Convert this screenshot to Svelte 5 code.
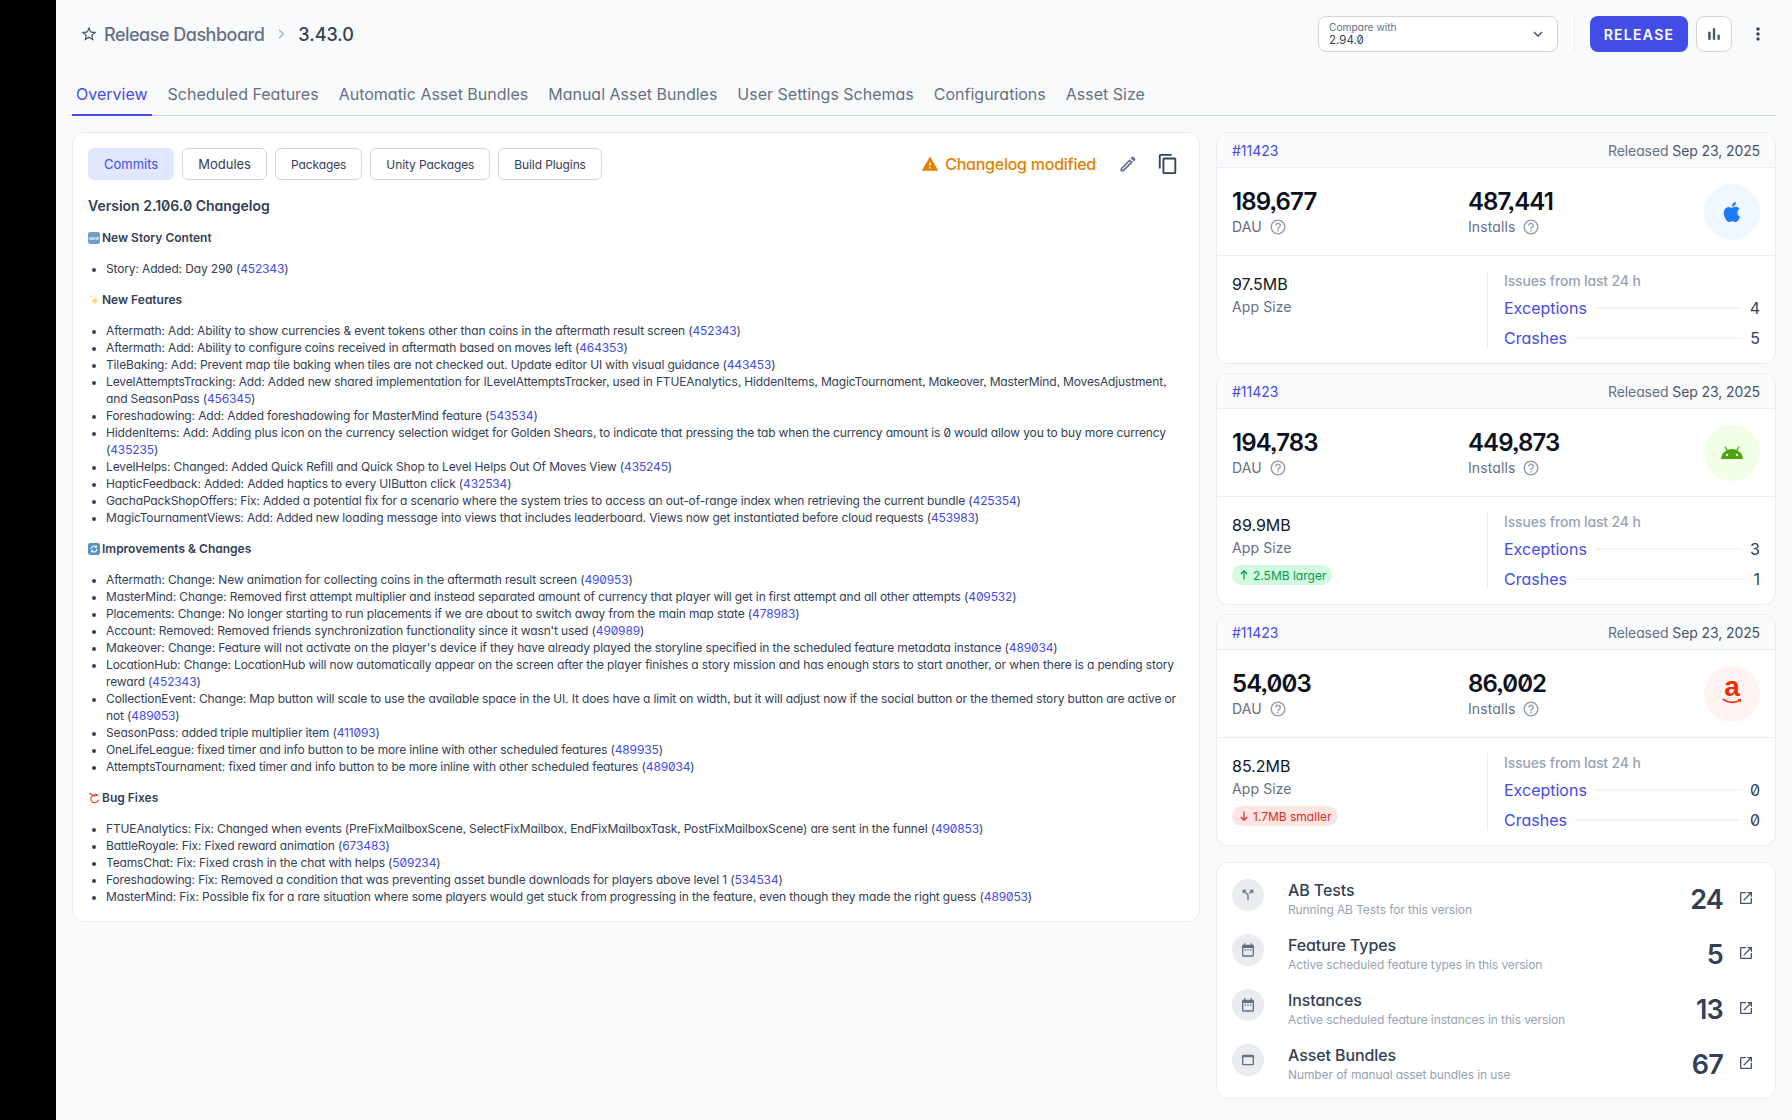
<script>
  const P = {
    star: "M22 9.24l-7.19-.62L12 2 9.19 8.63 2 9.24l5.46 4.73L5.82 21 12 17.27 18.18 21l-1.63-7.03L22 9.24zM12 15.4l-3.76 2.27 1-4.28-3.32-2.88 4.38-.38L12 6.1l1.71 4.04 4.38.38-3.32 2.88 1 4.28L12 15.4z",
    warning: "M1 21h22L12 2 1 21zm12-3h-2v-2h2v2zm0-4h-2v-4h2v4z",
    edit: "M3 17.25V21h3.75L17.81 9.94l-3.75-3.75L3 17.25zM5.92 19H5v-.92l9.06-9.06.92.92L5.92 19zM20.71 5.63l-2.34-2.34c-.2-.2-.45-.29-.71-.29s-.51.1-.7.29l-1.83 1.83 3.75 3.75 1.83-1.83c.39-.39.39-1.02 0-1.41z",
    copy: "M16 1H4c-1.1 0-2 .9-2 2v14h2V3h12V1zm3 4H8c-1.1 0-2 .9-2 2v14c0 1.1.9 2 2 2h11c1.1 0 2-.9 2-2V7c0-1.1-.9-2-2-2zm0 16H8V7h11v14z",
    bars: "M5 9.2h3V19H5zM10.6 5h2.8v14h-2.8zm5.6 8H19v6h-2.8z",
    more: "M12 8c1.1 0 2-.9 2-2s-.9-2-2-2-2 .9-2 2 .9 2 2 2zm0 2c-1.1 0-2 .9-2 2s.9 2 2 2 2-.9 2-2-.9-2-2-2zm0 6c-1.1 0-2 .9-2 2s.9 2 2 2 2-.9 2-2-.9-2-2-2z",
    expand: "M16.59 8.59L12 13.17 7.41 8.59 6 10l6 6 6-6z",
    help: "M11 18h2v-2h-2v2zm1-16C6.48 2 2 6.48 2 12s4.48 10 10 10 10-4.48 10-10S17.52 2 12 2zm0 18c-4.41 0-8-3.59-8-8s3.59-8 8-8 8 3.59 8 8-3.59 8-8 8zm0-14c-2.21 0-4 1.79-4 4h2c0-1.1.9-2 2-2s2 .9 2 2c0 2-3 1.75-3 5h2c0-2.25 3-2.5 3-5 0-2.21-1.79-4-4-4z",
    open: "M19 19H5V5h7V3H5c-1.11 0-2 .9-2 2v14c0 1.1.89 2 2 2h14c1.1 0 2-.9 2-2v-7h-2v7zM14 3v2h3.59l-9.83 9.83 1.41 1.41L19 6.41V10h2V3h-7z",
    split: "M14 4l2.29 2.29-2.88 2.88 1.42 1.42 2.88-2.88L20 10V4zm-4 0H4v6l2.29-2.29 4.71 4.7V20h2v-8.41l-5.29-5.3z",
    cal: "M9 11H7v2h2v-2zm4 0h-2v2h2v-2zm4 0h-2v2h2v-2zm2-7h-1V2h-2v2H8V2H6v2H5c-1.11 0-1.99.9-1.99 2L3 20c0 1.1.89 2 2 2h14c1.1 0 2-.9 2-2V6c0-1.1-.9-2-2-2zm0 16H5V9h14v11z",
    web: "M19 4H5c-1.11 0-2 .9-2 2v12c0 1.1.89 2 2 2h14c1.1 0 2-.9 2-2V6c0-1.1-.89-2-2-2zm0 14H5V8h14v10z",
    apple: "M18.71 19.5C17.88 20.74 17 21.95 15.66 21.97C14.32 22 13.89 21.18 12.37 21.18C10.84 21.18 10.37 21.95 9.1 22C7.79 22.05 6.8 20.68 5.96 19.47C4.25 17 2.94 12.45 4.7 9.39C5.57 7.87 7.13 6.91 8.82 6.88C10.1 6.86 11.32 7.75 12.11 7.75C12.89 7.75 14.37 6.68 15.92 6.84C16.57 6.87 18.39 7.1 19.56 8.82C19.47 8.88 17.39 10.1 17.41 12.63C17.44 15.65 20.06 16.66 20.09 16.67C20.06 16.74 19.67 18.11 18.71 19.5M13 3.5C13.73 2.67 14.94 2.04 15.94 2C16.07 3.17 15.6 4.35 14.9 5.19C14.21 6.04 13.07 6.7 11.95 6.61C11.8 5.46 12.36 4.26 13 3.5Z",
    android: "M17.6 9.48l1.84-3.18c.16-.31.04-.69-.26-.85a.637.637 0 0 0-.83.22l-1.88 3.24a11.463 11.463 0 0 0-8.94 0L5.65 5.67a.643.643 0 0 0-.87-.2c-.28.18-.37.54-.22.83L6.4 9.48A10.78 10.78 0 0 0 1 18h22a10.78 10.78 0 0 0-5.4-8.52zM7 15.25a1.25 1.25 0 1 1 0-2.5 1.25 1.25 0 0 1 0 2.5zm10 0a1.25 1.25 0 1 1 0-2.5 1.25 1.25 0 0 1 0 2.5z"
  };

  const tabs = ["Overview","Scheduled Features","Automatic Asset Bundles","Manual Asset Bundles","User Settings Schemas","Configurations","Asset Size"];
  const chips = ["Commits","Modules","Packages","Unity Packages","Build Plugins"];

  const sections = [
    { icon: "new", title: "New Story Content", items: [
      ["Story: Added: Day 290","452343"]
    ]},
    { icon: "spark", title: "New Features", items: [
      ["Aftermath: Add: Ability to show currencies & event tokens other than coins in the aftermath result screen","452343"],
      ["Aftermath: Add: Ability to configure coins received in aftermath based on moves left","464353"],
      ["TileBaking: Add: Prevent map tile baking when tiles are not checked out. Update editor UI with visual guidance","443453"],
      ["LevelAttemptsTracking: Add: Added new shared implementation for ILevelAttemptsTracker, used in FTUEAnalytics, HiddenItems, MagicTournament, Makeover, MasterMind, MovesAdjustment, and SeasonPass","456345"],
      ["Foreshadowing: Add: Added foreshadowing for MasterMind feature","543534"],
      ["HiddenItems: Add: Adding plus icon on the currency selection widget for Golden Shears, to indicate that pressing the tab when the currency amount is 0 would allow you to buy more currency","435235"],
      ["LevelHelps: Changed: Added Quick Refill and Quick Shop to Level Helps Out Of Moves View","435245"],
      ["HapticFeedback: Added: Added haptics to every UIButton click","432534"],
      ["GachaPackShopOffers: Fix: Added a potential fix for a scenario where the system tries to access an out-of-range index when retrieving the current bundle","425354"],
      ["MagicTournamentViews: Add: Added new loading message into views that includes leaderboard. Views now get instantiated before cloud requests","453983"]
    ]},
    { icon: "refresh", title: "Improvements & Changes", items: [
      ["Aftermath: Change: New animation for collecting coins in the aftermath result screen","490953"],
      ["MasterMind: Change: Removed first attempt multiplier and instead separated amount of currency that player will get in first attempt and all other attempts","409532"],
      ["Placements: Change: No longer starting to run placements if we are about to switch away from the main map state","478983"],
      ["Account: Removed: Removed friends synchronization functionality since it wasn't used","490989"],
      ["Makeover: Change: Feature will not activate on the player's device if they have already played the storyline specified in the scheduled feature metadata instance","489034"],
      ["LocationHub: Change: LocationHub will now automatically appear on the screen after the player finishes a story mission and has enough stars to start another, or when there is a pending story reward","452343"],
      ["CollectionEvent: Change: Map button will scale to use the available space in the UI. It does have a limit on width, but it will adjust now if the social button or the themed story button are active or not","489053"],
      ["SeasonPass: added triple multiplier item","411093"],
      ["OneLifeLeague: fixed timer and info button to be more inline with other scheduled features","489935"],
      ["AttemptsTournament: fixed timer and info button to be more inline with other scheduled features","489034"]
    ]},
    { icon: "thread", title: "Bug Fixes", items: [
      ["FTUEAnalytics: Fix: Changed when events (PreFixMailboxScene, SelectFixMailbox, EndFixMailboxTask, PostFixMailboxScene) are sent in the funnel","490853"],
      ["BattleRoyale: Fix: Fixed reward animation","673483"],
      ["TeamsChat: Fix: Fixed crash in the chat with helps","509234"],
      ["Foreshadowing: Fix: Removed a condition that was preventing asset bundle downloads for players above level 1","534534"],
      ["MasterMind: Fix: Possible fix for a rare situation where some players would get stuck from progressing in the feature, even though they made the right guess","489053"]
    ]}
  ];

  const releases = [
    { dau:"189,677", installs:"487,441", size:"97.5MB", os:"apple", ex:4, cr:5 },
    { dau:"194,783", installs:"449,873", size:"89.9MB", os:"android", ex:3, cr:1, delta:{ up:true, text:"2.5MB larger" } },
    { dau:"54,003", installs:"86,002", size:"85.2MB", os:"amazon", ex:0, cr:0, delta:{ up:false, text:"1.7MB smaller" } }
  ];

  const stats = [
    { icon:"split", title:"AB Tests", sub:"Running AB Tests for this version", n:24 },
    { icon:"cal", title:"Feature Types", sub:"Active scheduled feature types in this version", n:5 },
    { icon:"cal", title:"Instances", sub:"Active scheduled feature instances in this version", n:13 },
    { icon:"web", title:"Asset Bundles", sub:"Number of manual asset bundles in use", n:67 }
  ];
</script>

<div class="app">
  <aside class="rail"></aside>
  <main class="main">
    <header class="top">
      <div class="crumbs">
        <svg class="star" viewBox="0 0 24 24"><path d={P.star}/></svg>
        <span class="crumb">Release Dashboard</span>
        <svg class="sep" viewBox="0 0 24 24"><path d="M9.500 6.500 15 12l-5.500 5.500" fill="none" stroke="currentColor" stroke-width="1.500"/></svg>
        <span class="ver">3.43.0</span>
      </div>
      <div class="actions">
        <div class="compare">
          <div class="cmp-text"><span class="cmp-label">Compare with</span><span class="cmp-val">2.94.0</span></div>
          <svg class="cmp-ic" viewBox="0 0 24 24"><path d={P.expand}/></svg>
        </div>
        <span class="vline"></span>
        <button class="release">RELEASE</button>
        <button class="square"><svg viewBox="0 0 24 24"><path d={P.bars}/></svg></button>
        <button class="kebab"><svg viewBox="0 0 24 24"><path d={P.more}/></svg></button>
      </div>
    </header>

    <nav class="tabs">
      {#each tabs as t, i}
        <span class="tab" class:active={i === 0}>{t}</span>
      {/each}
    </nav>

    <div class="grid">
      <section class="card log">
        <div class="log-top">
          <div class="chips">
            {#each chips as c, i}
              <span class="chip" class:on={i === 0} class:small={i > 1}>{c}</span>
            {/each}
          </div>
          <div class="log-tools">
            <svg class="warn" viewBox="0 0 24 24"><path d={P.warning}/></svg>
            <span class="modified">Changelog modified</span>
            <svg class="tool pen" viewBox="0 0 24 24"><path d={P.edit}/></svg>
            <svg class="tool cp" viewBox="0 0 24 24"><path d={P.copy}/></svg>
          </div>
        </div>
        <h1 class="log-title">Version 2.106.0 Changelog</h1>
        {#each sections as s, si}
          <h2 class="sec" class:first={si === 0}>
            {#if s.icon === "new"}
              <svg class="emo" viewBox="0 0 14 14"><rect width="14" height="14" rx="2.500" fill="#6f9fc9"/><text x="7" y="8.800" text-anchor="middle" font-size="5" font-weight="700" fill="#e9f2fa" font-family="Liberation Sans">NEW</text></svg>
            {:else if s.icon === "spark"}
              <svg class="emo" viewBox="0 0 14 14"><path d="M8 3c.6 3 1.600 4 5 5-3.400 1-4.400 2-5 5-.6-3-1.600-4-5-5 3.400-1 4.400-2 5-5z" fill="#fcd980"/><path d="M3 0c.3 1.500.8 2 2.500 2.500C3.800 3 3.300 3.500 3 5c-.3-1.500-.8-2-2.500-2.500C2.200 2 2.700 1.500 3 0z" fill="#fde7ad"/></svg>
            {:else if s.icon === "refresh"}
              <svg class="emo" viewBox="0 0 14 14"><rect width="14" height="14" rx="2.500" fill="#5b92c4"/><path d="M3.500 7a3.500 3.500 0 0 1 6-2.400M10.500 7a3.500 3.500 0 0 1-6 2.400" fill="none" stroke="#fff" stroke-width="1.300"/><path d="M10.500 2.500v3h-3zM3.500 11.500v-3h3z" fill="#fff"/></svg>
            {:else}
              <svg class="emo" viewBox="0 0 14 14"><path d="M2 1.500 5 3.500C7.500 5 10 5 11.500 3.500M11.500 3.500C9 2 4.500 4 3.500 7 2.500 10.500 5.500 13 8.500 12.500 10.500 12 12 11 12.500 9.500" fill="none" stroke="#d92d20" stroke-width="1.200" stroke-linecap="round"/></svg>
            {/if}
            <span>{s.title}</span>
          </h2>
          <ul class="list">
            {#each s.items as it}
              <li>{it[0]} (<span class="lnk">{it[1]}</span>)</li>
            {/each}
          </ul>
        {/each}
      </section>

      <div class="side">
        {#each releases as r}
          <section class="card rel">
            <div class="rel-head">
              <span class="lnk rid">#11423</span>
              <span class="rdate"><span class="muted">Released</span> Sep 23, 2025</span>
            </div>
            <div class="rel-metrics">
              <div class="metric">
                <div class="num">{r.dau}</div>
                <div class="mlabel">DAU <svg class="q" viewBox="0 0 24 24"><path d={P.help}/></svg></div>
              </div>
              <div class="metric">
                <div class="num">{r.installs}</div>
                <div class="mlabel">Installs <svg class="q" viewBox="0 0 24 24"><path d={P.help}/></svg></div>
              </div>
              <div class="os {r.os}">
                {#if r.os === "apple"}
                  <svg viewBox="0 0 24 24"><path d={P.apple}/></svg>
                {:else if r.os === "android"}
                  <svg viewBox="0 0 24 24"><path d={P.android}/></svg>
                {:else}
                  <span class="amz">a<svg viewBox="0 0 24 8"><path d="M2 1.500c6 4.500 14 4.500 19 1" fill="none" stroke="#e62e05" stroke-width="1.800" stroke-linecap="round"/><path d="M18.500 1.500 22.500 1 22 5z" fill="#e62e05"/></svg></span>
                {/if}
              </div>
            </div>
            <div class="rel-bottom">
              <div class="size">
                <div class="sval">{r.size}</div>
                <div class="mlabel sl">App Size</div>
                {#if r.delta}
                  <span class="delta" class:up={r.delta.up} class:down={!r.delta.up}>
                    <svg viewBox="0 0 12 12"><path d={r.delta.up ? "M6 10.500V2M2.800 5 6 1.800 9.200 5" : "M6 1.500V10M2.800 7 6 10.200 9.200 7"} fill="none" stroke="currentColor" stroke-width="1.200"/></svg>
                    {r.delta.text}
                  </span>
                {/if}
              </div>
              <div class="issues">
                <div class="ititle">Issues from last 24 h</div>
                <div class="irow"><span class="lnk iname">Exceptions</span><span class="iline"></span><span class="ival">{r.ex}</span></div>
                <div class="irow"><span class="lnk iname">Crashes</span><span class="iline"></span><span class="ival">{r.cr}</span></div>
              </div>
            </div>
          </section>
        {/each}

        <section class="card stats">
          {#each stats as s}
            <div class="stat">
              <span class="sic"><svg viewBox="0 0 24 24"><path d={P[s.icon]}/></svg></span>
              <div class="stxt">
                <div class="st">{s.title}</div>
                <div class="ss">{s.sub}</div>
              </div>
              <span class="sn">{s.n}</span>
              <svg class="ext" viewBox="0 0 24 24"><path d={P.open}/></svg>
            </div>
          {/each}
        </section>
      </div>
    </div>
  </main>
</div>

<style>
  :global(body) { margin: 0; background: #f9fafb; }
  .app {
    display: flex; height: 1120px; overflow: hidden; background: #f9fafb; color: #344054;
    font-family: Inter, "Noto Sans", sans-serif;
    font-feature-settings: "cv11", "zero", "ss03";
  }
  .rail { width: 56px; flex: none; background: #000; }
  .main { flex: 1; min-width: 0; padding: 16px 16px 0; display: flex; flex-direction: column; }

  .top { display: flex; justify-content: space-between; align-items: center; height: 36px; }
  .crumbs { display: flex; align-items: center; padding-left: 8px; }
  .star { width: 18px; height: 18px; fill: #475467; margin-right: 6px; }
  .crumb { font-size: 18px; font-weight: 500; color: #667085; letter-spacing: -.5px; }
  .sep { width: 18px; height: 18px; margin: 0 8px; color: #98a2b3; }
  .ver { font-size: 18px; font-weight: 500; color: #344054; font-feature-settings: "cv11"; }
  .actions { display: flex; align-items: center; }
  .compare {
    width: 240px; height: 36px; box-sizing: border-box; background: #fff; border: 1px solid #d0d5dd; border-radius: 8px;
    display: flex; align-items: center; justify-content: space-between; padding: 0 10px;
  }
  .cmp-text { display: flex; flex-direction: column; line-height: 13px; }
  .cmp-label { font-size: 10.2px; color: #667085; }
  .cmp-val { font-size: 11.5px; color: #344054; }
  .cmp-ic { width: 18px; height: 18px; fill: #475467; }
  .vline { width: 1px; height: 36px; background: #eaecf0; margin: 0 15px 0 16px; }
  .release {
    width: 98px; height: 36px; border: 0; border-radius: 8px; background: #444ce7; color: #fff;
    font: inherit; font-size: 14px; font-weight: 600; letter-spacing: 1.300px; padding: 0;
  }
  .square {
    width: 36px; height: 36px; margin-left: 8px; background: #fff; border: 1px solid #d0d5dd; border-radius: 8px;
    display: grid; place-items: center; padding: 0;
  }
  .square svg { width: 20px; height: 20px; fill: #475467; }
  .kebab { width: 20px; height: 20px; margin: 0 8px 0 16px; border: 0; background: none; padding: 0; }
  .kebab svg { width: 20px; height: 20px; fill: #344054; display: block; }

  .tabs { display: flex; gap: 12px; margin-top: 23px; height: 41px; border-bottom: 1px solid #d0d5dd; box-sizing: border-box; }
  .tab { padding: 0 4px; font-size: 16px; color: #667085; line-height: 38px; height: 41px; box-sizing: border-box; }
  .tab.active { color: #444ce7; border-bottom: 2px solid #444ce7; }

  .grid { display: grid; grid-template-columns: 1128px 560px; gap: 16px; margin-top: 16px; align-items: start; }
  .card { background: #fff; border: 1px solid #eaecf0; border-radius: 12px; box-sizing: border-box; overflow: hidden; }

  .log { padding: 15px; height: 790px; }
  .log-top { display: flex; justify-content: space-between; align-items: center; height: 32px; }
  .chips { display: flex; gap: 8px; }
  .chip {
    height: 32px; box-sizing: border-box; padding: 0 15px; display: flex; align-items: center; font-size: 13px;
    border: 1px solid #d0d5dd; border-radius: 6px; color: #344054;
  }
  .chip.small { font-size: 12px; letter-spacing: -.1px; }
  .chip.on { background: #e0e7ff; border-color: #e0e7ff; color: #444ce7; }
  .log-tools { display: flex; align-items: center; }
  .warn { width: 18px; height: 18px; fill: #e08200; margin-right: 6px; }
  .modified { font-size: 16px; font-weight: 500; color: #e08200; margin-right: 22px; letter-spacing: -.25px; }
  .tool { width: 20px; height: 20px; }
  .pen { fill: #667085; margin-right: 19px; }
  .cp { width: 22px; height: 22px; fill: #344054; margin-right: 5px; }

  .log-title { font-size: 14px; font-weight: 600; line-height: 20px; margin: 16px 0 0; color: #344054; }
  .sec { display: flex; align-items: center; gap: 2px; font-size: 12px; font-weight: 600; line-height: 17px; margin: 14px 0 0; color: #344054; }
  .sec.first { margin-top: 13px; }
  .emo { width: 12px; height: 12px; flex: none; }
  .list { margin: 14px 0 14px; padding: 0 0 0 18px; font-size: 12px; line-height: 17px; color: #344054; letter-spacing: -.14px; }
  .list li::marker { font-size: 11px; }
  .lnk { color: #444ce7; }

  .side { display: flex; flex-direction: column; gap: 9px; }
  .rel { height: 232px; display: flex; flex-direction: column; }
  .rel-head {
    height: 35px; flex: none; box-sizing: border-box; display: flex; justify-content: space-between; align-items: center;
    padding: 0 15px; background: #f9fafb; border-bottom: 1px solid #eaecf0; font-size: 14px;
  }
  .rdate { color: #475467; letter-spacing: -.1px; font-feature-settings: "cv11"; }
  .muted { color: #667085; }
  .rel-metrics {
    height: 88px; flex: none; box-sizing: border-box; display: flex; align-items: center; padding: 0 15px; border-bottom: 1px solid #eaecf0;
  }
  .metric { width: 236px; flex: none; }
  .num { font-size: 24px; font-weight: 600; line-height: 30px; color: #0c111d; letter-spacing: -.9px; }
  .mlabel { display: flex; align-items: center; gap: 7px; font-size: 14px; line-height: 20px; color: #667085; letter-spacing: .1px; }
  .mlabel.sl { margin-top: 1px; }
  .q { width: 18px; height: 18px; fill: #98a2b3; }
  .os { margin-left: auto; width: 56px; height: 56px; border-radius: 50%; display: grid; place-items: center; }
  .os svg { width: 24px; height: 24px; }
  .os.apple { background: #eff8ff; } .os.apple svg { fill: #1b7af5; }
  .os.android { background: #f3fee7; } .os.android svg { fill: #4ca30d; }
  .os.amazon { background: #fef3f0; }
  .amz { display: flex; flex-direction: column; align-items: center; font-family: "Liberation Sans", sans-serif; font-weight: 700; font-size: 28px; line-height: 22px; color: #e62e05; font-feature-settings: normal; margin-top: -6px; }
  .os .amz svg { width: 22px; height: 7px; display: block; }

  .rel-bottom { flex: 1; display: flex; padding: 15px 15px 0; }
  .size { width: 255px; flex: none; padding-top: 1px; }
  .sval { font-size: 16px; line-height: 24px; color: #101828; }
  .delta {
    display: inline-flex; align-items: center; gap: 3px; height: 20px; margin-top: 7px; padding: 0 6px; border-radius: 10px; font-size: 12px;
  }
  .delta svg { width: 12px; height: 12px; }
  .up { background: #d1fadf; color: #039855; }
  .down { background: #fee4e2; color: #d92d20; }
  .issues { flex: 1; height: 77px; border-left: 1px solid #eaecf0; padding-left: 16px; }
  .ititle { font-size: 14px; line-height: 20px; color: #98a2b3; font-weight: 500; letter-spacing: -.15px; margin-bottom: 2px; }
  .irow { display: flex; align-items: center; height: 30px; }
  .iname { font-size: 16px; }
  .iline { flex: 1; height: 2px; background: #f2f4f7; margin: 0 8px; }
  .ival { font-size: 16px; color: #344054; }

  .stats { padding: 16px 15px 15px; display: flex; flex-direction: column; gap: 16px; height: 237px; margin-top: 7px; }
  .stat { display: flex; align-items: flex-start; height: 39px; }
  .sic { width: 32px; height: 32px; border-radius: 50%; background: #eaecf0; display: grid; place-items: center; margin-right: 24px; flex: none; }
  .sic svg { width: 16px; height: 16px; fill: #667085; }
  .stxt { flex: 1; min-width: 0; }
  .st { font-size: 16px; line-height: 22px; color: #344054; font-weight: 500; letter-spacing: -.1px; }
  .ss { font-size: 12px; line-height: 17px; color: #98a2b3; letter-spacing: -.1px; }
  .sn { font-size: 27px; line-height: 34px; font-weight: 600; color: #344054; margin-top: 4px; letter-spacing: -.8px; }
  .ext { width: 16px; height: 16px; fill: #475467; margin: 11px 6px 0 15px; }
</style>
